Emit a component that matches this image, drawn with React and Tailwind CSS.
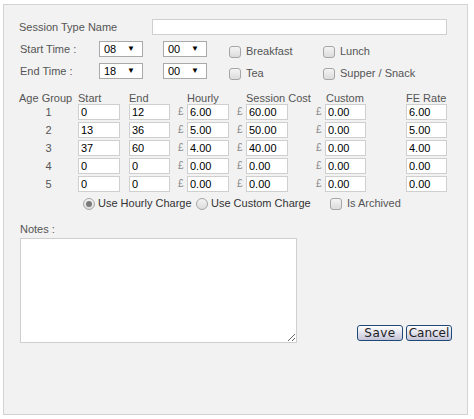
import React from "react";

const rows = [
  { n: 1, start: "0", end: "12", hourly: "6.00", cost: "60.00", fe: "6.00" },
  { n: 2, start: "13", end: "36", hourly: "5.00", cost: "50.00", fe: "5.00" },
  { n: 3, start: "37", end: "60", hourly: "4.00", cost: "40.00", fe: "4.00" },
  { n: 4, start: "0", end: "0", hourly: "0.00", cost: "0.00", fe: "0.00" },
  { n: 5, start: "0", end: "0", hourly: "0.00", cost: "0.00", fe: "0.00" },
];

const arial = "[font-family:'Liberation_Sans',Arial,sans-serif]";

const inputCls = `h-[16px] border border-[#cfcfcf] bg-white pl-[2px] text-[11px] text-black outline-none ${arial}`;

function Select({ value }) {
  return (
    <div className="w-[44px] h-[16px] border border-[#a9a9a9] bg-white flex items-center justify-between pl-[4px] pr-[7px]">
      <span className="text-[11px] text-black leading-none">{value}</span>
      <span className="text-[8px] text-black leading-none">▼</span>
    </div>
  );
}

function Check({ label, width }) {
  return (
    <div className={`flex items-center whitespace-nowrap ${width || ""}`}>
      <span className="shrink-0 w-[12px] h-[12px] rounded-[3px] border border-[#a6a6a6] bg-gradient-to-b from-[#f4f4f4] to-[#dcdcdc]" />
      <span className="ml-[5px] text-[#555]">{label}</span>
    </div>
  );
}

function Radio({ checked }) {
  return (
    <span className="shrink-0 w-[12px] h-[12px] rounded-full border border-[#a6a6a6] bg-gradient-to-b from-[#f4f4f4] to-[#dcdcdc] flex items-center justify-center">
      {checked && <span className="w-[6px] h-[6px] rounded-full bg-[#7a7a7a]" />}
    </span>
  );
}

function Money({ value, width, disabled }) {
  return (
    <div className="flex items-center">
      <span className="w-[9px] text-[10px] text-[#8a8a8a] leading-none">£</span>
      <input
        readOnly
        disabled={disabled}
        defaultValue={value}
        className={`${inputCls} ${width} ${disabled ? "bg-[#ebebe4] text-[#8a8a8a]" : ""}`}
      />
    </div>
  );
}

const grid = "grid grid-cols-[59px_51px_49px_59px_79px_90px_41px] items-center whitespace-nowrap";

export default function App() {
  return (
    <div className={`pt-[4px] pl-[3px] ${arial} text-[11px]`}>
      <div className="w-[465px] h-[411px] border border-[#d3d3d3] bg-[#f2f2f2] pl-[15px] pr-[15px] pt-[14px]">
        {/* name */}
        <div className="flex items-center h-[16px]">
          <span className="w-[133px] text-[#555]">Session Type Name</span>
          <input readOnly className={`${inputCls} w-[295px]`} />
        </div>

        {/* start time */}
        <div className="mt-[6px] flex items-center h-[16px]">
          <span className="w-[80px] pl-[1px] text-[#555]">Start Time :</span>
          <Select value="08" />
          <div className="ml-[20px]">
            <Select value="00" />
          </div>
          <div className="ml-[22px] mt-[5px] flex">
            <Check label="Breakfast" width="w-[94px]" />
            <Check label="Lunch" />
          </div>
        </div>

        {/* end time */}
        <div className="mt-[6px] flex items-center h-[16px]">
          <span className="w-[80px] pl-[1px] text-[#555]">End Time :</span>
          <Select value="18" />
          <div className="ml-[20px]">
            <Select value="00" />
          </div>
          <div className="ml-[22px] mt-[5px] flex">
            <Check label="Tea" width="w-[94px]" />
            <Check label="Supper / Snack" />
          </div>
        </div>

        {/* table */}
        <div className={`${grid} mt-[11px] h-[14px] text-[#555]`}>
          <span>Age Group</span>
          <span>Start</span>
          <span>End</span>
          <span className="pl-[9px]">Hourly</span>
          <span className="pl-[9px]">Session Cost</span>
          <span className="pl-[10px]">Custom</span>
          <span>FE Rate</span>
        </div>
        <div className="flex flex-col gap-[2px]">
          {rows.map((r) => (
            <div key={r.n} className={`${grid} h-[16px]`}>
              <span className="text-center text-[#555]">{r.n}</span>
              <input readOnly defaultValue={r.start} className={`${inputCls} w-[42px]`} />
              <input readOnly defaultValue={r.end} className={`${inputCls} w-[41px]`} />
              <Money value={r.hourly} width="w-[42px]" />
              <Money value={r.cost} width="w-[42px]" />
              <Money value="0.00" width="w-[41px]" disabled />
              <input readOnly defaultValue={r.fe} className={`${inputCls} w-[41px]`} />
            </div>
          ))}
        </div>

        {/* charge options */}
        <div className="mt-[5px] h-[13px] flex items-center pl-[64px] whitespace-nowrap">
          <div className="flex items-center w-[113px]">
            <Radio checked />
            <span className="ml-[3px] text-[#333]">Use Hourly Charge</span>
          </div>
          <div className="flex items-center w-[134px]">
            <Radio />
            <span className="ml-[3px] text-[#333]">Use Custom Charge</span>
          </div>
          <Check label="Is Archived" />
        </div>

        {/* notes */}
        <div className="mt-[11px] h-[14px] pl-[1px] text-[#555]">Notes :</div>
        <div className="mt-[3px] flex items-end">
          <textarea className="ml-[1px] w-[277px] h-[105px] border border-[#cfcfcf] bg-white outline-none" />
          <div className="ml-auto mb-[2px] flex gap-[3px] [font-family:'DejaVu_Sans',Verdana,sans-serif] text-[12px] text-[#222]">
            <button className="w-[46px] h-[16px] rounded-[3px] border border-[#1f4a78] bg-gradient-to-b from-white to-[#c4c4d8] leading-none tracking-[0.5px]">
              Save
            </button>
            <button className="w-[46px] h-[16px] rounded-[3px] border border-[#1f4a78] bg-gradient-to-b from-white to-[#c4c4d8] leading-none">
              Cancel
            </button>
          </div>
        </div>
      </div>
    </div>
  );
}
